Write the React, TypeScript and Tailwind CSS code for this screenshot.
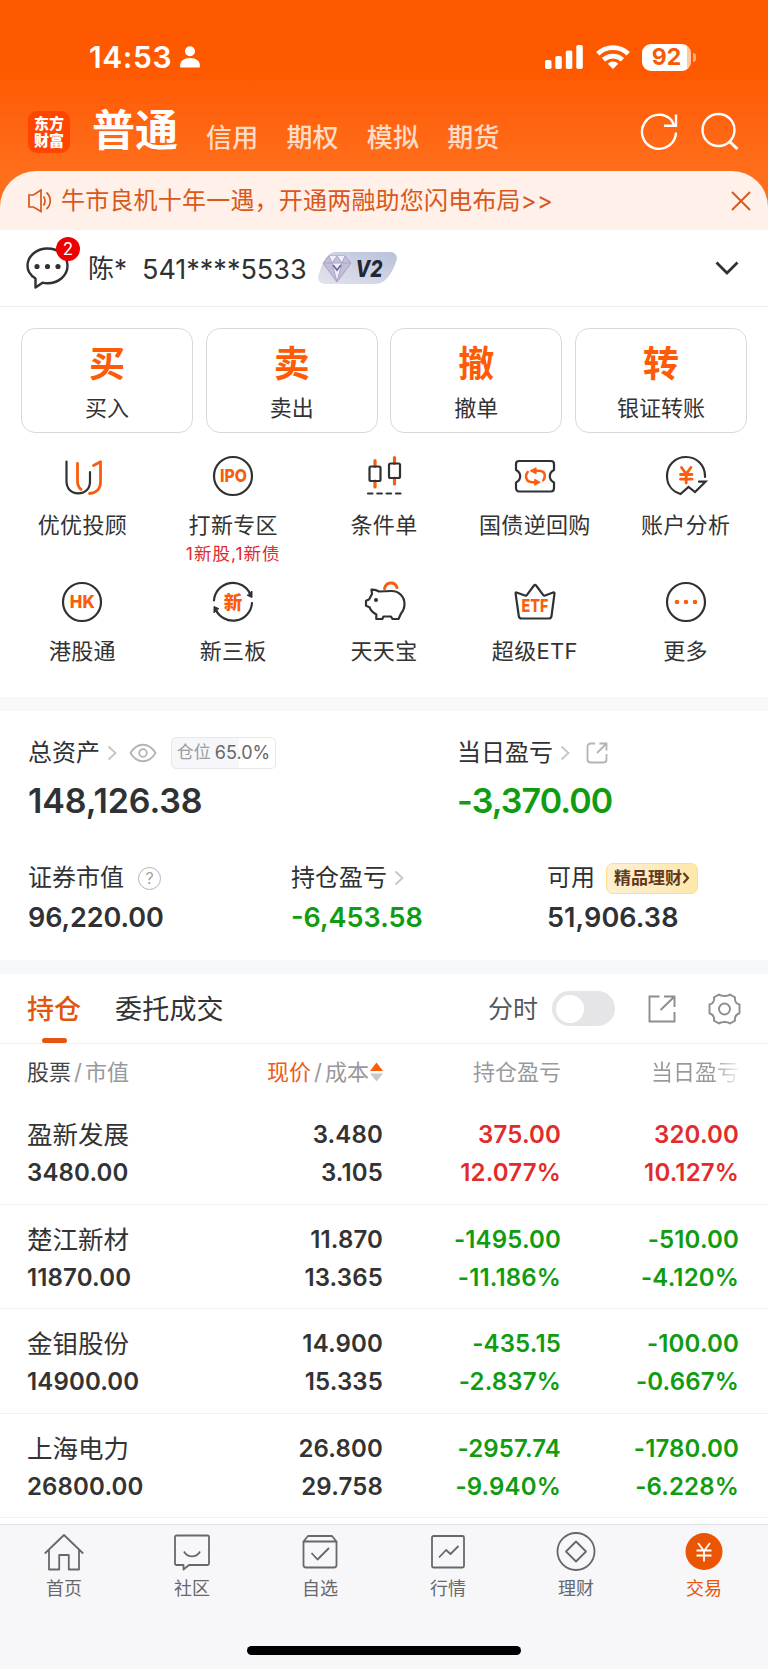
import React from 'react';

const INK = '#2f3133';
const ORANGE = '#f95d0e';

type Holding = {
  name: string;
  value: string;
  price: string;
  cost: string;
  profit: string;
  profitRate: string;
  today: string;
  todayRate: string;
  up: boolean;
};

const holdings: Holding[] = [
  { name: '盈新发展', value: '3480.00', price: '3.480', cost: '3.105', profit: '375.00', profitRate: '12.077%', today: '320.00', todayRate: '10.127%', up: true },
  { name: '楚江新材', value: '11870.00', price: '11.870', cost: '13.365', profit: '-1495.00', profitRate: '-11.186%', today: '-510.00', todayRate: '-4.120%', up: false },
  { name: '金钼股份', value: '14900.00', price: '14.900', cost: '15.335', profit: '-435.15', profitRate: '-2.837%', today: '-100.00', todayRate: '-0.667%', up: false },
  { name: '上海电力', value: '26800.00', price: '26.800', cost: '29.758', profit: '-2957.74', profitRate: '-9.940%', today: '-1780.00', todayRate: '-6.228%', up: false },
];

const actions = [
  { mark: '买', label: '买入' },
  { mark: '卖', label: '卖出' },
  { mark: '撤', label: '撤单' },
  { mark: '转', label: '银证转账' },
];

const Icon: React.FC<{ children: React.ReactNode }> = ({ children }) => (
  <svg width="44" height="44" viewBox="-2 -2 44 44" fill="none" stroke={INK} strokeWidth="2.200" strokeLinecap="round" strokeLinejoin="round">
    {children}
  </svg>
);

const IconText: React.FC<{ x?: number; y: number; size: number; width?: number; children: string }> = ({ x = 20, y, size, width, children }) => (
  <text
    x={x}
    y={y}
    textAnchor="middle"
    fontSize={size}
    fontWeight="800"
    textLength={width}
    lengthAdjust="spacingAndGlyphs"
    fill={ORANGE}
    stroke="none"
  >
    {children}
  </text>
);

const shortcuts: { label: string; note?: string; icon: React.ReactNode }[] = [
  {
    label: '优优投顾',
    icon: (
      <Icon>
        <path d="M4.500 5.500V25c0 7.500 4.500 12.300 11.800 12.300S28 32.500 28 25.500V16" />
        <path d="M15.500 7.500V25c0 4 1.200 6.500 3.500 8.300M31.500 9.500l7-3.800V26c0 6.500-4 11-11 11.500" stroke={ORANGE} strokeWidth="2.800" />
      </Icon>
    ),
  },
  {
    label: '打新专区',
    note: '1新股,1新债',
    icon: (
      <Icon>
        <circle cx="20" cy="20" r="19" />
        <IconText x={20.5} y={26} size={17.5} width={27}>IPO</IconText>
      </Icon>
    ),
  },
  {
    label: '条件单',
    icon: (
      <Icon>
        <path d="M11 4.500v6M11 25v6M30.500 1.500v6M30.500 22v6" stroke={ORANGE} strokeWidth="3.200" />
        <rect x="5.500" y="10.500" width="11" height="14.500" rx="1.500" />
        <rect x="25" y="7.500" width="11" height="14.500" rx="1.500" />
        <path d="M4 37.500h4.500M13.300 37.500h4.500M22.600 37.500h4.500M32 37.500h4.500" />
      </Icon>
    ),
  },
  {
    label: '国债逆回购',
    icon: (
      <Icon>
        <path d="M4 5h32c1.800 0 3 1.200 3 3v6c-3 1.500-4.200 3.500-4.200 6.300S36 25 39 26.500V32c0 2-1.200 3.500-3 3.500H4c-1.800 0-3-1.500-3-3.500v-5.500c3-1.500 4.200-3.500 4.200-6.200S4 15.500 1 14V8c0-1.800 1.200-3 3-3z" />
        <path d="M21 14.700h2.500c4 0 6.300 2 6.300 5 0 2-.6 3.400-1.600 4.600M12.700 16c-1 1.200-1.700 2.500-1.700 4.300 0 4 3 6 7 6h2" stroke={ORANGE} strokeWidth="2.500" />
        <path d="M21 12v5.600l-5.500-2.900zM19.800 23.500v5.600l5-2.800z" fill={ORANGE} stroke={ORANGE} strokeWidth="1.200" />
      </Icon>
    ),
  },
  {
    label: '账户分析',
    icon: (
      <Icon>
        <path d="M39 21C39.500 9.500 31 1 20 1S1 9.500 1 20c0 9 5.500 15.500 13.500 18l8-7 6.500 5 10.500-10.300h-6.500" strokeLinejoin="miter" />
        <path d="M15.500 11.500l4.700 6.500 4.700-6.500M14.500 18.500h11.500M14.500 23.200h11.500M20.200 18v9" stroke={ORANGE} strokeWidth="2.800" />
      </Icon>
    ),
  },
  {
    label: '港股通',
    icon: (
      <Icon>
        <circle cx="20" cy="20" r="19" />
        <IconText x={20.3} y={26.3} size={17.5} width={25}>HK</IconText>
      </Icon>
    ),
  },
  {
    label: '新三板',
    icon: (
      <Icon>
        <path d="M1 18.500A19 19 0 0 1 37.500 12.500M39 21A19 19 0 0 1 2.500 27" />
        <path d="M39 9.500v6l-4.500-2zM1 30.500v-6l4.500 2z" fill={INK} stroke={INK} strokeWidth="1" />
        <IconText y={26.5} size={18.5}>新</IconText>
      </Icon>
    ),
  },
  {
    label: '天天宝',
    icon: (
      <Icon>
        <path d="M20.500 6.500c1.500-7 10.500-7.500 12.500-1" stroke={ORANGE} strokeWidth="3" />
        <path d="M15 9.500c-2.500-1.500-5-2-7.500-1.800l.5 4.300-3 5.500-3 1.200v5l3.500 1.500c1 3 3.500 5.500 6.800 7.300v4.500h6l1.200-2.500h7.500l1.500 2.500h6l2.500-5.500c2-2.300 3.500-5.500 3.500-9.500 0-7.500-5.500-13-13-13-4.500 0-9 .2-12.500.5z" />
        <circle cx="12" cy="18" r="2" fill={INK} stroke="none" />
      </Icon>
    ),
  },
  {
    label: '超级ETF',
    icon: (
      <Icon>
        <path d="M1.500 10.500l8.500 3c.8.300 1.500 0 2-.7L19 3.500c.6-.9 1.500-.9 2.100 0l7 9.300c.5.700 1.200 1 2 .7l8-3c1-.3 1.500.2 1.400 1.100L36.500 34c-.2 1.500-1.200 2.500-2.700 2.500H6.500C5 36.500 4 35.500 3.800 34L.6 11.600c-.1-.9.100-1.300.9-1.100z" />
        <IconText y={30.3} size={18} width={27}>ETF</IconText>
      </Icon>
    ),
  },
  {
    label: '更多',
    icon: (
      <Icon>
        <circle cx="20" cy="20" r="19" />
        <path d="M11 20h.01M20 20h.01M29 20h.01" stroke={ORANGE} strokeWidth="4.600" />
      </Icon>
    ),
  },
];

const Chevron: React.FC = () => (
  <svg width="10" height="16" viewBox="0 0 10 16" fill="none" stroke="#c3c5c8" strokeWidth="1.800">
    <path d="M1.500 1.500L8.500 8l-7 6.500" />
  </svg>
);

const StatusBar: React.FC = () => (
  <div className="flex h-[92px] items-center pt-[22px] pl-[89px] text-white">
    <span className="w-[91px] text-[30px] font-semibold leading-none tracking-[0.6px]">14:53</span>
    <svg width="20" height="24" viewBox="0 0 20 24" fill="#fff">
      <circle cx="10" cy="6.200" r="5" />
      <path d="M0 21c0-5 4-8 10-8s10 3 10 8c0 1-.8 1.500-1.500 1.500h-17C.7 22.500 0 22 0 21z" />
    </svg>
    <svg className="ml-[345px]" width="38" height="24" viewBox="0 0 38 24" fill="#fff">
      <rect x="0" y="15" width="6.500" height="9" rx="1.800" />
      <rect x="10.300" y="11" width="6.500" height="13" rx="1.800" />
      <rect x="20.800" y="5.500" width="6.500" height="18.500" rx="1.800" />
      <rect x="31.300" y="0" width="6.500" height="24" rx="1.800" />
    </svg>
    <svg className="ml-[13px]" width="34" height="24" viewBox="0 0 34 24" fill="none" stroke="#fff" strokeWidth="4.800">
      <path d="M1.800 8.800a22 22 0 0 1 30.400 0M7.500 14.800a14 14 0 0 1 19 0" />
      <path d="M17 24l-5.300-5.300a7.700 7.700 0 0 1 10.600 0z" fill="#fff" stroke="none" />
    </svg>
    <div className="ml-3 flex h-[27px] w-[49px] items-center justify-center rounded-[9px] bg-linear-to-r from-white from-92% to-[#ffc9a8] to-92% text-[23px] font-bold leading-none text-[#f65a08]">
      92
    </div>
    <div className="ml-[2px] h-[9px] w-[3px] rounded-r-full bg-[#ffab7b]" />
  </div>
);

const TitleBar: React.FC = () => (
  <div className="flex h-[79px] items-center pl-7 text-white">
    <div className="flex h-[42px] w-[42px] flex-col items-center justify-center rounded-[9px] bg-[#ff4500] text-[15px] font-black leading-[17px]">
      <span>东方</span>
      <span>财富</span>
    </div>
    <h1 className="ml-[22px] -mt-[2px] text-[43px] font-bold leading-none">普通</h1>
    <div className="mt-[12px] ml-[28px] flex gap-[28px] text-[26px] font-medium leading-none tracking-[0.2px] text-[#ffdcc6]">
      <span>信用</span>
      <span>期权</span>
      <span>模拟</span>
      <span>期货</span>
    </div>
    <svg className="ml-auto" width="38" height="38" viewBox="0 0 38 38" fill="none" stroke="#fff" strokeWidth="2.400">
      <path d="M36 19.500A17 17 0 1 1 31.500 7.300L34 12M36 1.500v11.200H24" />
    </svg>
    <svg className="ml-[23px] mr-[29px] -mt-[2px]" width="38" height="38" viewBox="0 0 38 38" fill="none" stroke="#fff" strokeWidth="2.400">
      <circle cx="17.500" cy="18" r="16" />
      <path d="M28.500 29.500l8 7.500" strokeWidth="3" />
    </svg>
  </div>
);

const Notice: React.FC = () => (
  <div className="flex h-[59px] items-center rounded-t-[36px] bg-[#fff0e9] pl-7 text-[#d9581b]">
    <svg width="24" height="24" viewBox="0 0 24 24" fill="none" stroke="#d9581b" strokeWidth="1.700">
      <path d="M1 6h4.500L13 1v21.500L5.500 18H1zM15.500 7.500c2 2.500 2 6.500 0 9M18.500 3.500c5 4.500 5 12 0 16.500" />
    </svg>
    <span className="ml-[9px] pt-px text-[24px] leading-none tracking-[0.200px]">牛市良机十年一遇，开通两融助您闪电布局&gt;&gt;</span>
    <svg className="ml-auto mr-[17px]" width="20" height="20" viewBox="0 0 20 20" stroke="#d9581b" strokeWidth="1.900">
      <path d="M1 1l18 18M19 1L1 19" />
    </svg>
  </div>
);

const AccountRow: React.FC = () => (
  <div className="flex h-[77px] items-center border-b border-[#ececee] pl-[26px] text-[#2f3133]">
    <div className="relative h-[42px] w-[43px]">
      <svg width="43" height="42" viewBox="0 0 43 42" fill="none" stroke={INK} strokeWidth="2.400" strokeLinejoin="round">
        <path d="M9.500 31.500C4.500 28.500 1.500 24 1.500 18.800 1.500 9 10.500 1.500 21.500 1.500s20 7.500 20 17.300-9 17.500-20 17.500c-2 0-3.500-.2-5-.600L9.500 40.500z" />
        <path d="M11 19.500h.01M21.500 19.500h.01M32 19.500h.01" strokeWidth="5.200" strokeLinecap="round" />
      </svg>
      <span className="absolute -top-[10px] left-[30px] flex h-6 w-6 items-center justify-center rounded-full bg-[#ed0000] text-[17px] leading-none text-white">2</span>
    </div>
    <span className="ml-[19px] w-[54px] pt-[2px] text-[26px] leading-none">陈*</span>
    <span className="w-[163px] whitespace-nowrap pt-[2px] text-[27px] leading-none">541****5533</span>
    <svg className="ml-[13px]" width="79" height="32" viewBox="0 0 79 32">
      <defs>
        <linearGradient id="vip" x1="0" y1="1" x2="1" y2="0">
          <stop offset="0" stopColor="#e2e4ee" />
          <stop offset="0.500" stopColor="#cfd3e3" />
          <stop offset="1" stopColor="#b8c0da" />
        </linearGradient>
      </defs>
      <path d="M18 0H72c5 0 8 4 6.500 8.500C75 18 70 32 56 32H7c-5 0-8-4-6.500-8.500C3 16 7 0 18 0z" fill="url(#vip)" />
      <path d="M11 4h16l6 7-14 19L5 11z" fill="#c3bfd9" stroke="#a5a1c0" strokeWidth="1" strokeLinejoin="round" />
      <path d="M11 4l3 7 5-7 5 7 3-7M5 11h28M14 11l5 19 5-19" fill="#f0eefa" stroke="#aaa5c8" strokeWidth="1" strokeLinejoin="round" />
      <path d="M15 13l4 5 4-5" fill="none" stroke="#6d6c9a" strokeWidth="1.800" />
      <text x="51" y="24.500" textAnchor="middle" fontSize="23" fontWeight="800" fontStyle="italic" fill="#1f2738" textLength="27" lengthAdjust="spacingAndGlyphs">V2</text>
    </svg>
    <svg className="ml-auto mr-[29px]" width="24" height="15" viewBox="0 0 24 15" fill="none" stroke={INK} strokeWidth="2.800">
      <path d="M1.500 1.500L12 12 22.500 1.500" />
    </svg>
  </div>
);

const Actions: React.FC = () => (
  <div className="grid grid-cols-4 gap-[12.5px] px-[21px] pt-[21px]">
    {actions.map((a) => (
      <button key={a.label} className="flex h-[105px] flex-col items-center rounded-[14px] border border-[#d8d9db] pt-[17px]">
        <span className="text-[36px] font-bold leading-none text-[#fd5b05]">{a.mark}</span>
        <span className="mt-[15px] text-[22px] leading-none text-[#333]">{a.label}</span>
      </button>
    ))}
  </div>
);

const Shortcuts: React.FC = () => (
  <div className="grid h-[264px] grid-cols-5 grid-rows-[125.5px_125.5px] px-[7px] pt-[21px]">
    {shortcuts.map((s) => (
      <div key={s.label} className="flex flex-col items-center">
        {s.icon}
        <span className="mt-4 text-[22px] leading-none tracking-[0.3px] text-[#333]">{s.label}</span>
        {s.note && <span className="mt-[9px] text-[17.5px] leading-none tracking-[1px] text-[#e02a2e]">{s.note}</span>}
      </div>
    ))}
  </div>
);

const Assets: React.FC = () => (
  <div className="h-[249px] text-[#2f3133]">
    <div className="grid grid-cols-[429px_1fr] pt-[25px] pl-[28px]">
      <div>
        <div className="flex h-[33px] items-center text-[24px] leading-none">
          <span className="mr-[7px]">总资产</span>
          <Chevron />
          <svg className="ml-[12px]" width="28" height="20" viewBox="0 0 28 20" fill="none" stroke="#b2b4b7" strokeWidth="1.800">
            <path d="M1.500 10C8-1 20-1 26.500 10 20 21 8 21 1.500 10z" />
            <circle cx="14" cy="10" r="3.800" />
          </svg>
          <span className="ml-[14px] flex h-8 w-[105px] items-center justify-center gap-1 rounded-[5px] border border-[#e6e7ea] bg-linear-to-r from-[#f6f7fa] from-65% to-white to-65% text-[17px] text-[#9a9c9f]">
            仓位 <span className="text-[18px] text-[#66686b]">65.0%</span>
          </span>
        </div>
        <div className="mt-[15px] text-[34px] font-semibold leading-none tracking-[-0.1px]">148,126.38</div>
      </div>
      <div>
        <div className="flex h-[33px] items-center text-[24px] leading-none">
          <span className="mr-[7px]">当日盈亏</span>
          <Chevron />
          <svg className="ml-[16px]" width="22" height="22" viewBox="0 0 22 22" fill="none" stroke="#b2b4b7" strokeWidth="1.800">
            <path d="M9 1.500H4.500a3 3 0 0 0-3 3v13a3 3 0 0 0 3 3h13a3 3 0 0 0 3-3V12M13.500 1.500h7v7M20 2L11 11" />
          </svg>
        </div>
        <div className="mt-[15px] text-[34px] font-semibold leading-none tracking-[-0.900px] text-[#109c10]">-3,370.00</div>
      </div>
    </div>
    <div className="mt-[44px] grid grid-cols-[263px_256px_1fr] pl-[28px]">
      <div>
        <div className="flex h-[32px] items-center text-[24px] leading-none">
          证券市值
          <span className="ml-[14px] flex h-[23px] w-[23px] items-center justify-center rounded-full border-[1.5px] border-[#b2b4b7] text-[16px] text-[#a2a4a7]">?</span>
        </div>
        <div className="mt-[10px] text-[27px] font-semibold leading-none tracking-[-0.100px]">96,220.00</div>
      </div>
      <div>
        <div className="flex h-[32px] items-center gap-[7px] text-[24px] leading-none">
          持仓盈亏
          <Chevron />
        </div>
        <div className="mt-[10px] text-[27px] font-semibold leading-none text-[#109c10]">-6,453.58</div>
      </div>
      <div>
        <div className="flex h-[32px] items-center text-[24px] leading-none">
          可用
          <span className="ml-[11px] flex h-[31px] w-[92px] items-center justify-center rounded-[7px] border border-[#f9df86] bg-linear-to-r from-[#fdf0d4] to-[#fde7ab] text-[17px] font-bold text-[#633a1c]">
            精品理财
            <svg width="8" height="12" viewBox="0 0 8 12" fill="none" stroke="#633a1c" strokeWidth="2.200">
              <path d="M1.500 1L6 6l-4.500 5" />
            </svg>
          </span>
        </div>
        <div className="mt-[10px] text-[27px] font-semibold leading-none tracking-[0.1px]">51,906.38</div>
      </div>
    </div>
  </div>
);

const PositionTabs: React.FC = () => (
  <div className="flex h-[70px] items-center border-b border-[#f0f0f2] pl-[27px] text-[27px] leading-none text-[#333]">
    <div className="relative flex h-full items-center pt-[2px] font-medium text-[#e3560f]">
      持仓
      <span className="absolute bottom-0 left-[15px] h-[5px] w-[25px] rounded-full bg-[#e3560f]" />
    </div>
    <span className="ml-[34px] pt-[2px] tracking-[0.2px]">委托成交</span>
    <span className="ml-auto pt-px text-[25px] text-[#55575a]">分时</span>
    <div className="ml-[14px] flex h-[35px] w-[63px] items-center rounded-full bg-[#e5e5e7] pl-1">
      <div className="h-7 w-7 rounded-full bg-white" />
    </div>
    <svg className="ml-[33px]" width="28" height="28" viewBox="0 0 28 28" fill="none" stroke="#8b8d90" strokeWidth="1.900">
      <path d="M11.500 1.500h-10v25h25V17M16 1.500h10.500V12M26 2L12.500 15" />
    </svg>
    <svg className="mr-[27px] ml-[32px]" width="33" height="32" viewBox="0 0 33 32" fill="none" stroke="#8b8d90" strokeWidth="1.900" strokeLinejoin="round">
      <path d="M11 1.500c2 2 9 2 11 0l5 2.800c-.500 3.500 1 6.200 4.500 7.200v8.800c-3.500 1-5 3.800-4.500 7.300l-5 2.900c-2-2-9-2-11 0l-5-2.900c.5-3.500-1-6.300-4.500-7.300v-8.800c3.500-1 5-3.700 4.500-7.200z" />
      <circle cx="16.500" cy="16" r="5.500" />
    </svg>
  </div>
);

const rowGrid = 'grid grid-cols-[200px_156px_178px_178px] pl-[27px]';

const PositionTable: React.FC = () => (
  <div className="h-[480px] overflow-hidden text-[#333]">
    <div className={`${rowGrid} h-[56px] items-center text-right text-[22px] leading-none text-[#97999c]`}>
      <span className="flex gap-[3px] text-left">
        <span className="text-[#44474a]">股票</span>/<span>市值</span>
      </span>
      <span className="flex items-center justify-end gap-[3px]">
        <span className="text-[#ee5b12]">现价</span>/<span>成本</span>
        <svg className="-ml-[2px]" width="13" height="20" viewBox="0 0 13 20">
          <path d="M6.500 .5L13 9H0z" fill="#fb5d0d" />
          <path d="M6.500 19.500L13 11.500H0z" fill="#c6c8cb" />
        </svg>
      </span>
      <span>持仓盈亏</span>
      <span className="bg-linear-to-r from-[#97999c] from-85% to-[#f4f4f4] bg-clip-text text-transparent">当日盈亏</span>
    </div>
    {holdings.map((h) => (
      <div
        key={h.name}
        className={`${rowGrid} h-[104.6px] border-b border-[#f3f3f5] pt-[23px] text-right text-[24px] font-semibold leading-none tracking-[0.150px]`}
      >
        <div className="flex flex-col gap-[14px] text-left">
          <span className="h-6 text-[25.5px] font-normal leading-[24px] tracking-normal">{h.name}</span>
          <span>{h.value}</span>
        </div>
        <div className="flex flex-col gap-[14px]">
          <span>{h.price}</span>
          <span>{h.cost}</span>
        </div>
        <div className={`flex flex-col gap-[14px] ${h.up ? 'text-[#e22b2b]' : 'text-[#109c10]'}`}>
          <span>{h.profit}</span>
          <span>{h.profitRate}</span>
        </div>
        <div className={`flex flex-col gap-[14px] ${h.up ? 'text-[#e22b2b]' : 'text-[#109c10]'}`}>
          <span>{h.today}</span>
          <span>{h.todayRate}</span>
        </div>
      </div>
    ))}
  </div>
);

const navItems: { label: string; active?: boolean; icon: React.ReactNode }[] = [
  { label: '首页', icon: <path d="M.8 20.500L20 2l19.200 18.500M5 17v19.500h10.200V22h9.600v14.500H35V17" /> },
  { label: '社区', icon: <path d="M4.500 2.500h31a1.500 1.500 0 0 1 1.500 1.500v26.500a1.500 1.500 0 0 1-1.500 1.500H17l-5.500 4.500V32h-7A1.500 1.500 0 0 1 3 30.500V4a1.500 1.500 0 0 1 1.500-1.500zM12 18.500c3.500 6.500 12.500 6.500 16 0" /> },
  { label: '自选', icon: <path d="M3.500 8.500h33V32a2.500 2.500 0 0 1-2.500 2.500H6A2.500 2.500 0 0 1 3.500 32zM3.500 8.500L8 3h24l4.500 5.500M11.500 20l6 6.500L29 15" /> },
  { label: '行情', icon: <path d="M5.500 3h29a1.500 1.500 0 0 1 1.500 1.500v28.500a1.500 1.500 0 0 1-1.500 1.500h-29A1.500 1.500 0 0 1 4 33V4.500A1.500 1.500 0 0 1 5.500 3zM11 24.500l7-7.500 4.500 4 8-8" /> },
  { label: '理财', icon: <path d="M38.500 18.500a18.500 18.500 0 1 1-37 0 18.500 18.500 0 0 1 37 0zM20 8.500l10 10-10 10-10-10z" /> },
  {
    label: '交易',
    active: true,
    icon: (
      <>
        <circle cx="20" cy="18.500" r="18.500" fill="#ea5504" stroke="none" />
        <path d="M14 10l6 8 6-8M12.500 17.500h15M12.500 22.500h15M20 18v10.500" stroke="#fff" />
      </>
    ),
  },
];

const BottomNav: React.FC = () => (
  <nav className="flex h-[145px] flex-col items-center border-t border-[#e2e2e5] bg-[#f7f7fa]">
    <div className="grid w-full grid-cols-6 pt-[7px]">
      {navItems.map((n) => (
        <div key={n.label} className={`flex flex-col items-center text-[18px] leading-none ${n.active ? 'text-[#ea5504]' : 'text-[#66686b]'}`}>
          <svg width="40" height="39" viewBox="0 -1 40 39" fill="none" stroke="#66686b" strokeWidth="1.800" strokeLinejoin="round">
            {n.icon}
          </svg>
          <span className="mt-[9px]">{n.label}</span>
        </div>
      ))}
    </div>
    <div className="mt-auto mb-[14px] h-[9px] w-[274px] rounded-full bg-black" />
  </nav>
);

const App: React.FC = () => {
  return (
    <div className="h-[1669px] w-[768px] overflow-hidden bg-white font-['Inter','Noto_Sans_CJK_SC',sans-serif]">
      <header className="bg-linear-to-b from-[#ff5900] from-30% to-[#ff6e1b] to-75%">
        <StatusBar />
        <TitleBar />
        <Notice />
      </header>
      <AccountRow />
      <Actions />
      <Shortcuts />
      <div className="h-[14px] bg-[#f7f8fa]" />
      <Assets />
      <div className="h-[14px] bg-[#f7f8fa]" />
      <PositionTabs />
      <PositionTable />
      <BottomNav />
    </div>
  );
};

export default App;
